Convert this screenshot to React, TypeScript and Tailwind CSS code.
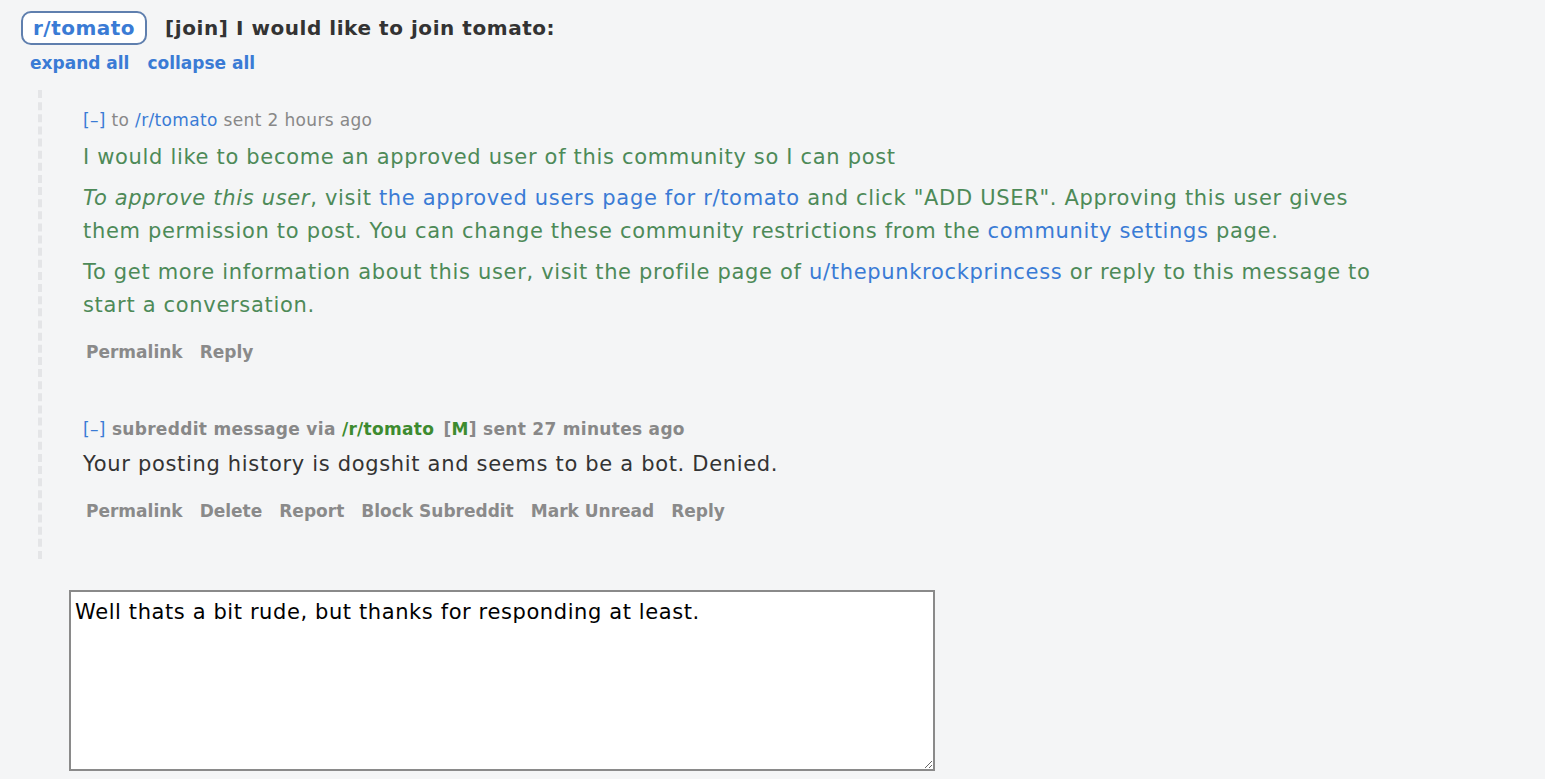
import React from 'react';

const BLUE = 'text-[#3a7bd5]';

const ActionLinks: React.FC<{ items: string[] }> = ({ items }) => (
  <ul className="flex gap-[17px] pl-[3px] text-[17px] font-bold text-[#8a8a8a]">
    {items.map((item) => (
      <li key={item}>
        <a href="#">{item}</a>
      </li>
    ))}
  </ul>
);

const App: React.FC = () => {
  return (
    <div className="min-h-screen bg-[#f4f5f6] pl-[21px] pt-[11px] font-['DejaVu_Sans',sans-serif]">
      {/* Title row */}
      <div className="flex items-center gap-[18px]">
        <a
          href="#"
          className={`flex h-[34px] items-center rounded-[10px] border-2 border-[#5f7fae] bg-white px-[10px] text-[20px] font-bold tracking-[0.5px] ${BLUE}`}
        >
          r/tomato
        </a>
        <h1 className="text-[20px] font-bold tracking-[0.55px] text-[#333333]">[join] I would like to join tomato:</h1>
      </div>
      <div className={`mt-[6px] flex gap-[18px] pl-[9px] text-[17px] font-bold ${BLUE}`}>
        <a href="#">expand all</a>
        <a href="#">collapse all</a>
      </div>

      {/* Thread */}
      <div className="ml-[17px] mt-[13px] h-[469px] border-l-4 border-dashed border-[#e4e5e7] pl-[41px] pt-[19px]">
        {/* Message 1 */}
        <div className="text-[17px] leading-[22px] tracking-[0.35px] text-[#888888]">
          <span className={BLUE}>[–]</span> to <a href="#" className={BLUE}>/r/tomato</a> sent 2 hours ago
        </div>
        <div className="mt-[10px] max-w-[1300px] text-[21px] leading-[33px] tracking-[0.68px] text-[#4d8a58]">
          <p>I would like to become an approved user of this community so I can post</p>
          <p className="mt-[8px]">
            <em>To approve this user</em>, visit{' '}
            <a href="#" className={BLUE}>the approved users page for r/tomato</a> and click "ADD USER". Approving this
            user gives them permission to post. You can change these community restrictions from the{' '}
            <a href="#" className={BLUE}>community settings</a> page.
          </p>
          <p className="mt-[8px]">
            To get more information about this user, visit the profile page of{' '}
            <a href="#" className={BLUE}>u/thepunkrockprincess</a> or reply to this message to start a conversation.
          </p>
        </div>
        <div className="mt-[18px]">
          <ActionLinks items={['Permalink', 'Reply']} />
        </div>

        {/* Message 2 */}
        <div className="mt-[53px] text-[17px] leading-[22px] font-bold tracking-[0.3px] text-[#888888]">
          <span className={`font-normal ${BLUE}`}>[–]</span> subreddit message via{' '}
          <a href="#" className="text-[#3d8b2f]">/r/tomato</a>{' '}
          <span className="ml-[3px]">
            [<span className="text-[#3d8b2f]">M</span>]
          </span>{' '}
          sent 27 minutes ago
        </div>
        <p className="mt-[8px] text-[21px] leading-[33px] tracking-[0.68px] text-[#333333]">
          Your posting history is dogshit and seems to be a bot. Denied.
        </p>
        <div className="mt-[18px]">
          <ActionLinks items={['Permalink', 'Delete', 'Report', 'Block Subreddit', 'Mark Unread', 'Reply']} />
        </div>
      </div>

      {/* Reply box */}
      <div className="mt-[31px] pl-[48px]">
        <textarea
          defaultValue="Well thats a bit rude, but thanks for responding at least."
          className="block h-[181px] w-[866px] border-2 border-[#8a8a8a] bg-white px-[4px] py-[6px] text-[21px] leading-[28px] tracking-[0.6px] text-black outline-none font-['DejaVu_Sans',sans-serif]"
        />
      </div>
    </div>
  );
};

export default App;
